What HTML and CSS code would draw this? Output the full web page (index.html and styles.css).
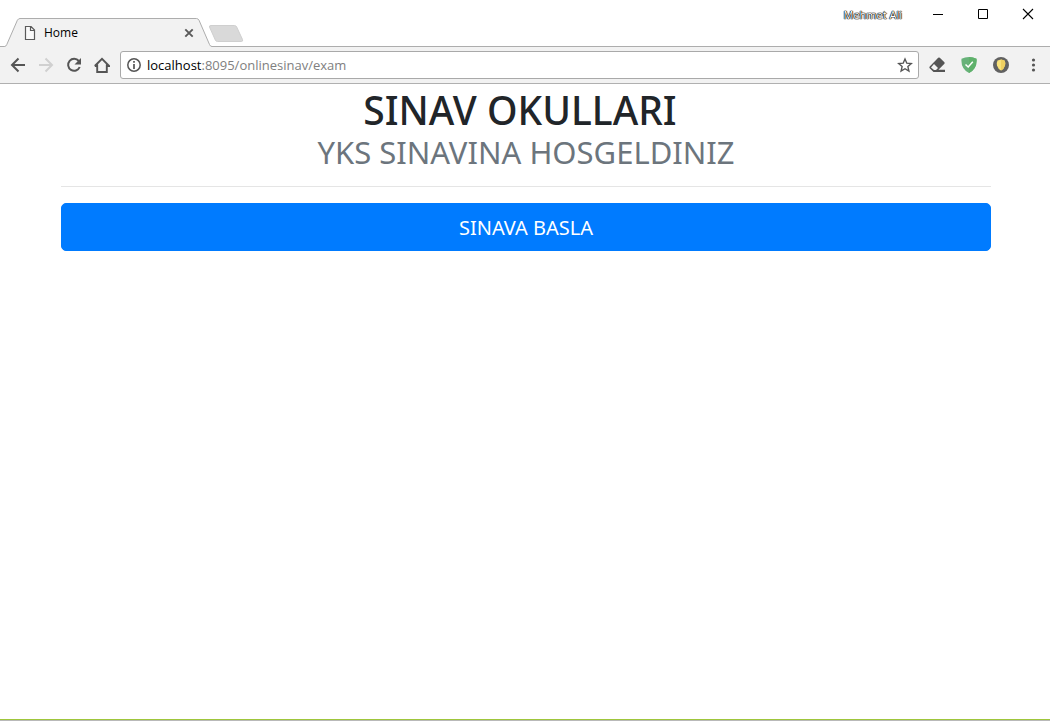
FILE: index.html
```html
<!DOCTYPE html>
<html lang="tr">
<head>
<meta charset="utf-8">
<title>Home</title>
<link rel="stylesheet" href="styles.css">
</head>
<body>
<div class="window">
  <header class="titlebar">
    <div class="tabs">
      <div class="tab">
        <svg class="tab-shape" viewBox="0 0 212 29" aria-hidden="true">
          <path d="M0 28.500H4.500Q6 28.500 6.800 26.500L17.400 2.200Q18.400.5 20 .5H196.500Q198 .5 199 2.200L209.500 26.500Q210.300 28.500 212 28.500V29H0z" fill="#f2f2f2"/>
          <path d="M0 28.500H4.500Q6 28.500 6.800 26.500L17.400 2.200Q18.400.5 20 .5H196.500Q198 .5 199 2.200L209.500 26.500Q210.300 28.500 212 28.500" fill="none" stroke="#adadad"/>
        </svg>
        <svg class="tab-page" viewBox="0 0 12 14" aria-hidden="true"><path d="M1.500.5H7L10.500 4V13.500H1.500zM6.500.5V4.500H10.500" fill="#fafafa" stroke="#5a5a5a" stroke-width="1.200"/></svg>
        <span class="tab-title">Home</span>
        <button class="icon-button tab-close" aria-label="Close tab"><svg width="10" height="10" viewBox="0 0 10 10"><path d="M1.300 1.300L8.700 8.700M8.700 1.300L1.300 8.700" stroke="#5a5a5a" stroke-width="1.900"/></svg></button>
      </div>
      <button class="icon-button new-tab" aria-label="New tab"><svg width="36" height="19" viewBox="0 0 36 19"><path d="M3 1.500H26.500Q28 1.500 28.700 3L34.500 15.500Q35.200 17.500 33.500 17.500H9.500Q8 17.500 7.300 16L1.500 3Q1 1.500 3 1.500z" fill="#d9d9d9" stroke="#cfcfcf"/></svg></button>
    </div>
    <div class="window-controls">
      <span class="profile">Mehmet Ali</span>
      <button class="icon-button control" aria-label="Minimize"><svg width="12" height="12" viewBox="0 0 12 12"><path d="M1 6.500H11" stroke="#000"/></svg></button>
      <button class="icon-button control" aria-label="Maximize"><svg width="12" height="12" viewBox="0 0 12 12"><path d="M1.500 1.500H10.500V10.500H1.500z" fill="none" stroke="#000"/></svg></button>
      <button class="icon-button control" aria-label="Close"><svg width="12" height="12" viewBox="0 0 12 12"><path d="M1 1L11 11M11 1L1 11" stroke="#000" stroke-width="1.100"/></svg></button>
    </div>
  </header>
  <nav class="toolbar" aria-label="Browser toolbar">
    <div class="navigation">
      <button class="icon-button" aria-label="Back"><svg width="16" height="16" viewBox="0 0 16 16"><path d="M15 8H2.500M8.500 1.500L2 8L8.500 14.500" fill="none" stroke="#555" stroke-width="2"/></svg></button>
      <button class="icon-button" aria-label="Forward"><svg width="16" height="16" viewBox="0 0 16 16"><path d="M1 8H13.500M7.500 1.500L14 8L7.500 14.500" fill="none" stroke="#d0d0d0" stroke-width="2"/></svg></button>
      <button class="icon-button" aria-label="Reload"><svg width="16" height="16" viewBox="0 0 16 16"><path d="M12.800 4A6 6 0 1 0 13.700 10" fill="none" stroke="#555" stroke-width="2"/><path d="M15 1V7.500H8.500z" fill="#555"/></svg></button>
      <button class="icon-button" aria-label="Home"><svg width="16" height="16" viewBox="0 0 16 16"><path d="M3.200 7.500V15H12.800V7.500M.8 9L8 1.800L15.200 9H12.500M.8 9H3.500" fill="none" stroke="#555" stroke-width="1.900"/></svg></button>
    </div>
    <div class="address">
      <svg width="14" height="14" viewBox="0 0 14 14" aria-hidden="true"><circle cx="7" cy="7" r="6.200" fill="none" stroke="#555" stroke-width="1.500"/><path d="M7 3V4.800M7 6V11" stroke="#555" stroke-width="1.700"/></svg>
      <a class="url" href="#"><span class="host">localhost</span>:8095/onlinesinav/exam</a>
      <button class="icon-button" aria-label="Bookmark this page"><svg width="16" height="16" viewBox="0 0 16 16"><path d="M8 2L9.800 6.200L14.300 6.600L10.900 9.600L11.900 14L8 11.700L4.100 14L5.100 9.600L1.700 6.600L6.200 6.200z" fill="none" stroke="#555" stroke-width="1.400"/></svg></button>
    </div>
    <div class="extensions">
      <button class="icon-button" aria-label="Eraser"><svg width="16" height="16" viewBox="0 0 16 16"><path d="M9.200.8Q10 .2 10.800.8L15.400 5.200Q16 6 15.400 6.800L9.500 12.800H16V15H4.500L.7 11.200Q0 10.300.7 9.400zM5 7L2 10.400L5 13H7L9 11z" fill="#555" fill-rule="evenodd"/></svg></button>
      <button class="icon-button" aria-label="Protection"><svg width="16" height="16" viewBox="0 0 16 16"><path d="M8 0Q12 .2 15.500 1.700Q16.500 11.500 8 16Q-.5 11.500.5 1.700Q4 .2 8 0z" fill="#67b279"/><path d="M8 0Q12 .2 15.500 1.700Q16.500 11.500 8 16z" fill="#5fb16b"/><path d="M4.500 7.500L7.200 10L11.800 4.800" fill="none" stroke="#fff" stroke-width="1.500"/></svg></button>
      <button class="icon-button" aria-label="Shield"><svg width="16" height="16" viewBox="0 0 16 16"><circle cx="8" cy="8" r="8" fill="#616161"/><path d="M8 2.500L11.500 3.500Q12.500 5 12 8.500Q11 12 8 13.500Q5 12 4 8.500Q3.500 5 4.500 3.500z" fill="#f9e27a"/><path d="M8 2.500L11.500 3.500Q12.500 5 12 8.500Q11 12 8 13.500z" fill="#efd060"/></svg></button>
      <button class="icon-button" aria-label="Menu"><svg width="16" height="16" viewBox="0 0 16 16"><g fill="#555"><circle cx="8.500" cy="3" r="1.600"/><circle cx="8.500" cy="8" r="1.600"/><circle cx="8.500" cy="13" r="1.600"/></g></svg></button>
    </div>
  </nav>
  <main class="page">
    <h1 class="title">SINAV OKULLARI</h1>
    <p class="subtitle">YKS SINAVINA HOSGELDINIZ</p>
    <hr class="divider">
    <button class="start">SINAVA BASLA</button>
  </main>
  <footer class="window-edge"></footer>
</div>
</body>
</html>
```
FILE: styles.css
```css
* { box-sizing: border-box; }
body { margin: 0; background: #fff; font-family: "Noto Sans", "Open Sans", sans-serif; }
.window { display: flex; flex-direction: column; min-height: 100vh; }
.icon-button { display: flex; align-items: center; justify-content: center; flex: none; margin: 0; padding: 0; border: 0; background: none; }
svg { display: block; flex: none; }

.titlebar { display: flex; justify-content: space-between; height: 46px; }
.tabs { display: flex; align-items: flex-end; }
.tab { position: relative; z-index: 1; display: flex; align-items: center; gap: 8px; width: 212px; height: 29px; margin-bottom: -1px; padding: 0 18px 0 24px; }
.tab-shape { position: absolute; left: 0; top: 0; width: 212px; height: 29px; }
.tab-page { position: relative; width: 12px; height: 14px; }
.tab-title { position: relative; flex: 1; font-family: "Open Sans", sans-serif; font-size: 12px; line-height: 16px; color: #000; }
.tab-close { position: relative; }
.new-tab { margin: 0 0 3px -4px; }
.window-controls { display: flex; align-items: flex-start; }
.profile { padding: 7px 13px 0 0; font-family: "Open Sans", sans-serif; font-size: 11px; line-height: 16px; color: #fff; text-shadow: 0 0 1px #000, 0 0 1px #000, 0 0 1px #000, 0 0 1px #000; }
.control { width: 45px; height: 28px; }

.toolbar { display: flex; align-items: center; gap: 10px; height: 38px; padding: 0 9px 0 10px; background: #f2f2f2; border-top: 1px solid #adadad; border-bottom: 1px solid #b0b0b0; }
.navigation { display: flex; gap: 12px; }
.address { display: flex; align-items: center; gap: 6px; flex: 1; height: 28px; padding: 0 5px 0 6px; background: #fff; border: 1px solid #a9a9a9; border-radius: 3px; }
.url { flex: 1; font-family: "Open Sans", sans-serif; font-size: 13px; line-height: 20px; color: #808080; text-decoration: none; }
.host { color: #000; }
.extensions { display: flex; gap: 16px; }

.page { flex: 1; width: 100%; max-width: 960px; margin: 0 auto; padding: 0 14px 0 16px; text-align: center; }
.title { margin: 0; padding-right: 12px; font-size: 39px; font-weight: 500; line-height: 52px; color: #212529; }
.subtitle { margin: 0; font-size: 31px; font-weight: 400; line-height: 32px; color: #6c757d; }
.divider { margin: 18px 0 16px; border: 0; border-top: 1px solid #e5e5e5; }
.start { display: block; width: 100%; padding: 9px 16px 7px; border: 1px solid #007bff; border-radius: 5px; background: #007bff; color: #fff; font-family: inherit; font-size: 20px; line-height: 30px; }
.window-edge { height: 2px; background: #b9b9b9; border-top: 1px solid #9fc63b; }
```
